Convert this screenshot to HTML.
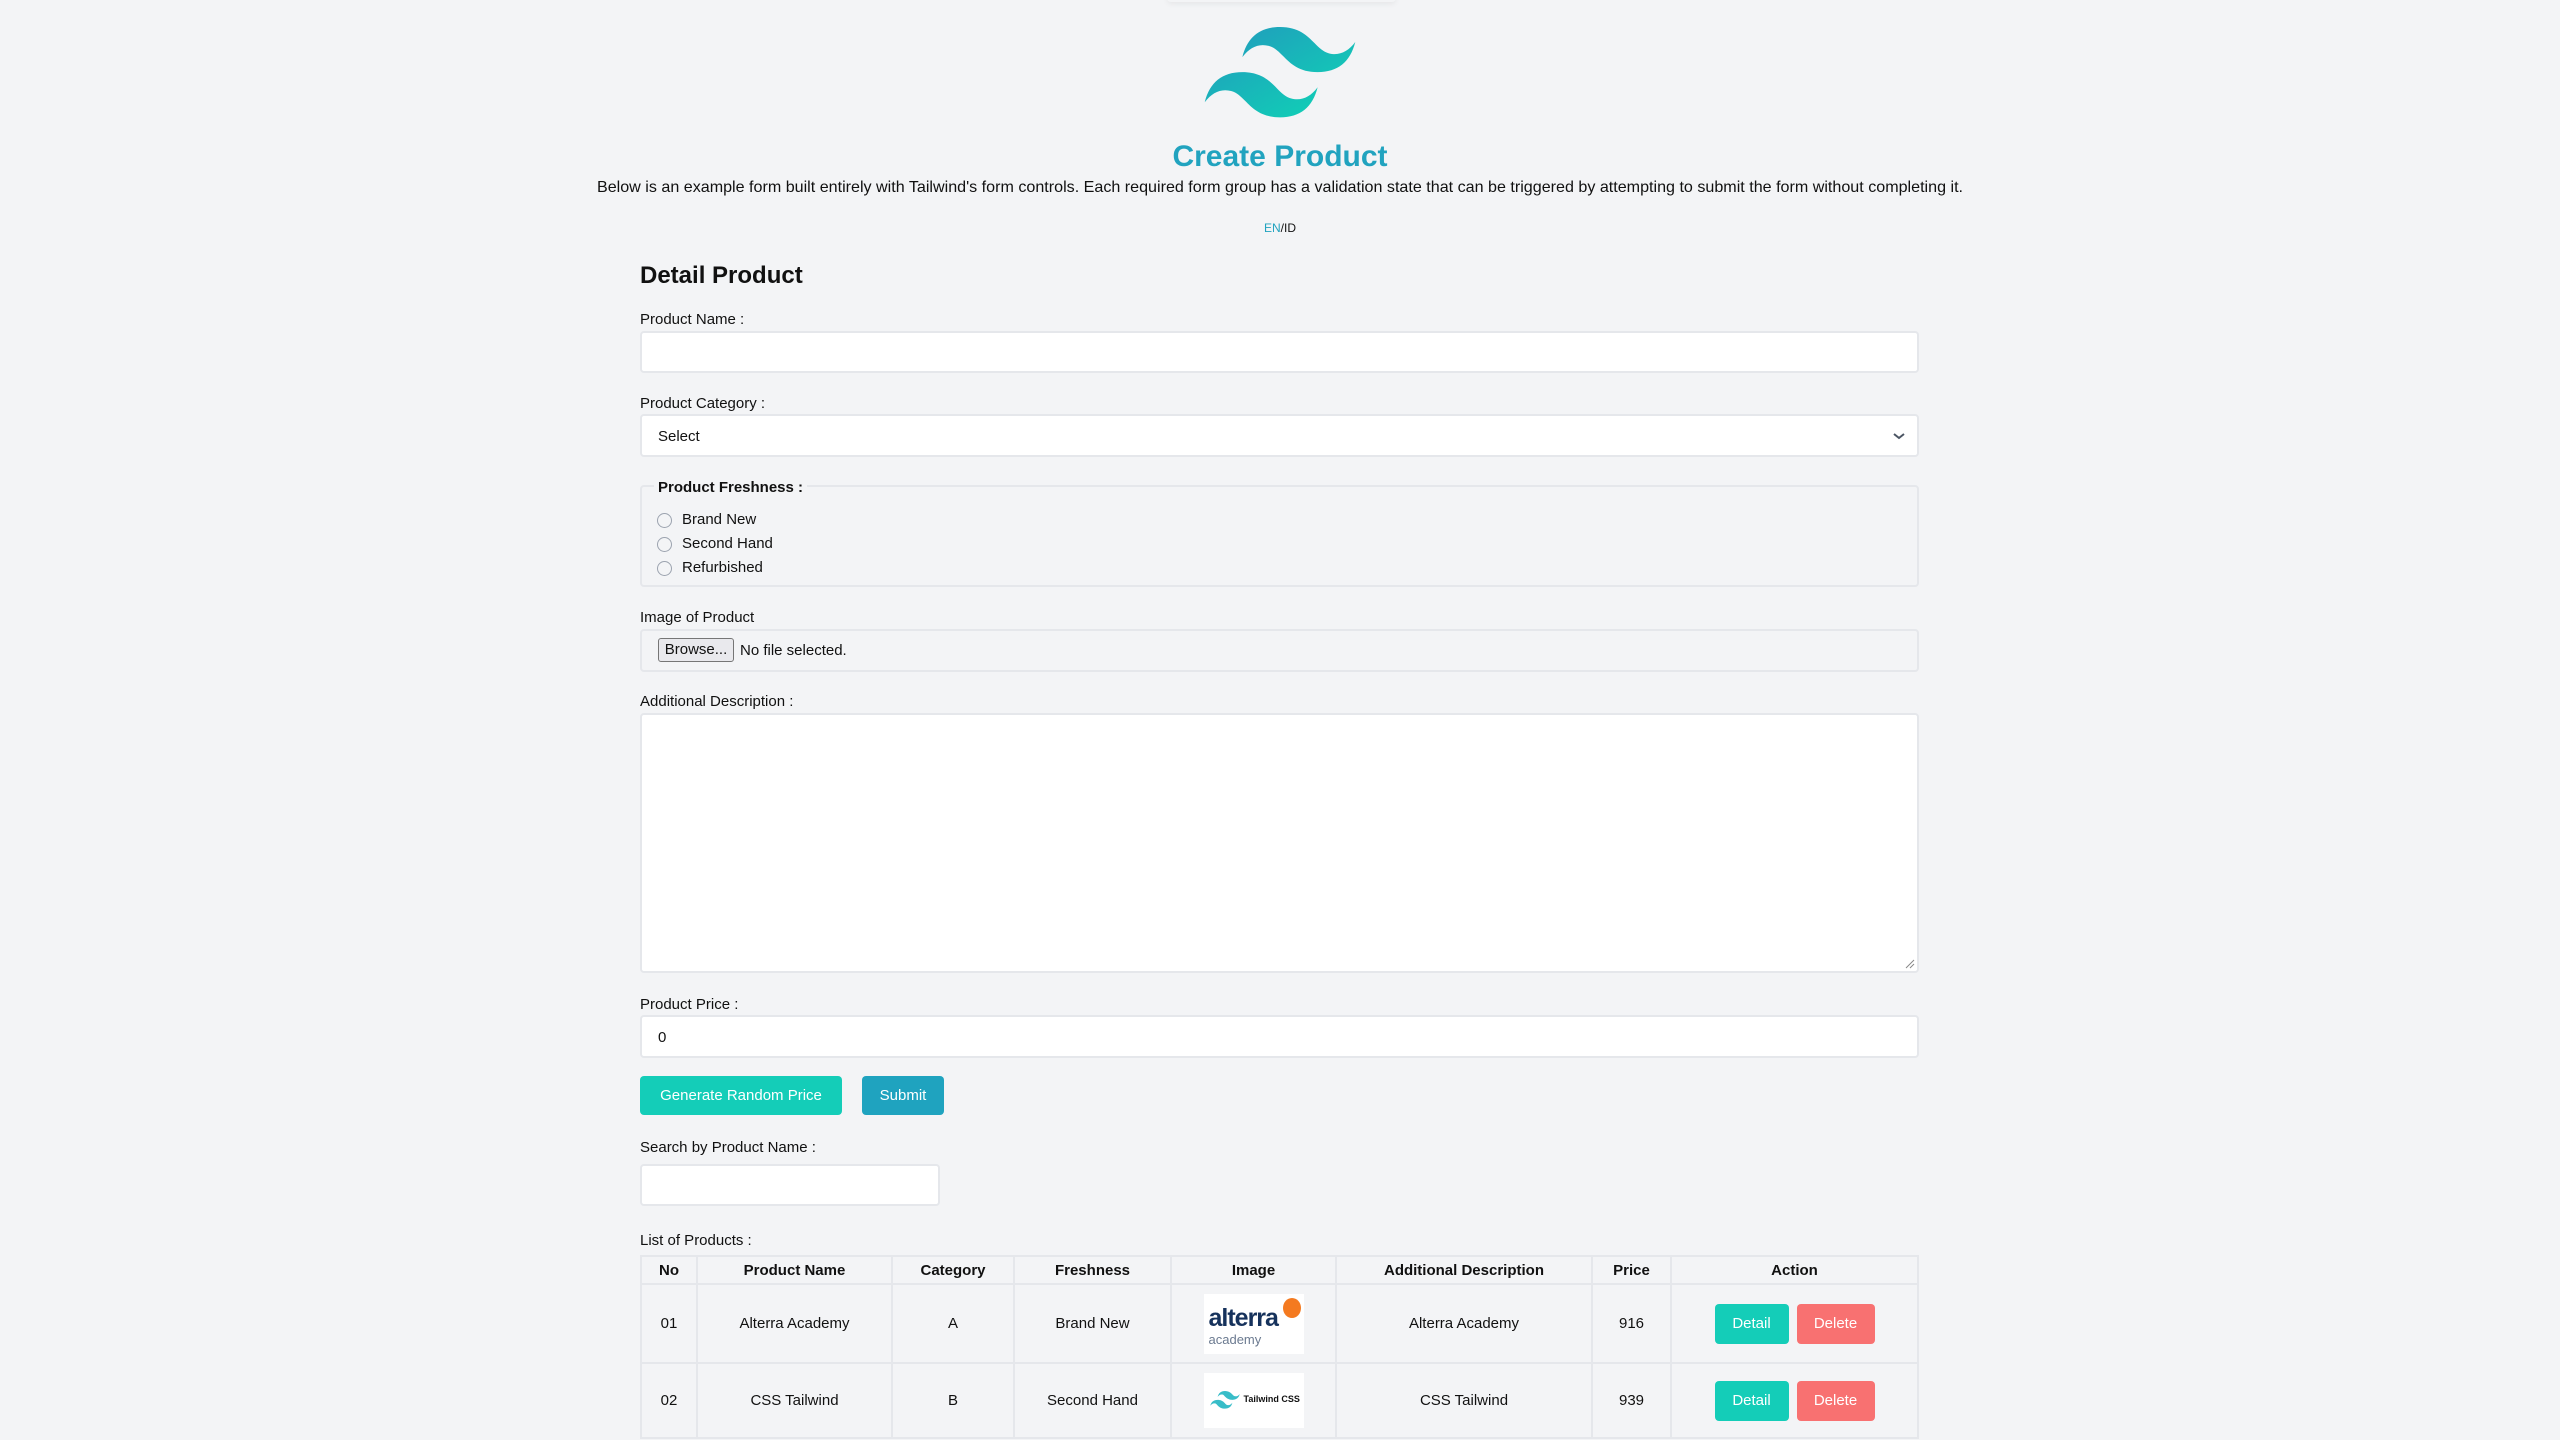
<!DOCTYPE html>
<html><head><meta charset="utf-8"><style>
*{box-sizing:border-box;margin:0;padding:0}
body{width:2560px;height:1440px;background:#f3f4f6;font-family:"Liberation Sans",sans-serif;color:#111;position:relative;overflow:hidden}
.a{position:absolute}
.lbl{position:absolute;left:640px;font-size:15px}
.inp{position:absolute;left:640px;width:1279px;background:#fff;border:2px solid #e5e7eb;border-radius:4px}
.btn{position:absolute;color:#fff;font-size:15px;border-radius:4px;display:flex;align-items:center;justify-content:center}
table{position:absolute;left:640px;top:1255px;width:1279px;border-collapse:collapse;font-size:15px}
td,th{border:2px solid #e5e7eb;text-align:center;vertical-align:middle}
th{height:28px;font-weight:bold}
.radio{position:absolute;left:657px;width:15px;height:15px;border:1px solid #9ca3af;border-radius:50%;background:#f3f4f6}
</style></head><body>
<div class="a" style="left:1167px;top:-6px;width:229px;height:8px;border-radius:6px;box-shadow:0 2px 6px rgba(0,0,0,.06);background:#f3f4f6"></div>
<svg class="a" style="left:1204px;top:27px" width="152" height="92" viewBox="0 0 54 33">
<defs><linearGradient id="g" x1="0" y1="0" x2="1" y2="1"><stop offset="0" stop-color="#2298bd"/><stop offset="1" stop-color="#0ed7b5"/></linearGradient></defs>
<path fill="url(#g)" d="M27 0c-7.2 0-11.7 3.6-13.5 10.8 2.7-3.6 5.850-4.950 9.450-4.050 2.054.513 3.522 2.004 5.147 3.653C30.744 13.090 33.808 16.200 40.500 16.200c7.200 0 11.700-3.600 13.500-10.800-2.700 3.600-5.850 4.950-9.450 4.050-2.054-.513-3.522-2.004-5.147-3.653C36.756 3.110 33.692 0 27 0zM13.500 16.200C6.300 16.200 1.800 19.800 0 27c2.700-3.600 5.850-4.950 9.450-4.050 2.054.514 3.522 2.004 5.147 3.653C17.244 29.290 20.308 32.400 27 32.400c7.200 0 11.700-3.600 13.500-10.800-2.700 3.600-5.850 4.950-9.450 4.050-2.054-.513-3.522-2.004-5.147-3.653C23.256 19.310 20.192 16.200 13.500 16.200z"/></svg>
<div class="a" style="left:0;width:2560px;top:140px;text-align:center;font-size:30px;font-weight:bold;color:#21a3bf">Create Product</div>
<div class="a" style="left:0;width:2560px;top:178px;text-align:center;font-size:16.1px">Below is an example form built entirely with Tailwind's form controls. Each required form group has a validation state that can be triggered by attempting to submit the form without completing it.</div>
<div class="a" style="left:0;width:2560px;top:221px;text-align:center;font-size:12px"><span style="color:#21a3bf">EN</span>/ID</div>
<div class="a" style="left:640px;top:262px;font-size:24px;font-weight:bold">Detail Product</div>
<div class="lbl" style="top:311px">Product Name :</div>
<div class="inp" style="top:331px;height:42px"></div>
<div class="lbl" style="top:395px">Product Category :</div>
<div class="inp" style="top:414px;height:43px"><span class="a" style="left:16px;top:12px;font-size:15px">Select</span>
<svg class="a" style="left:1250px;top:15px" width="14" height="10" viewBox="0 0 14 10"><path d="M2 3l5 4 5-4" fill="none" stroke="#4b5563" stroke-width="2"/></svg></div>
<div class="a" style="left:640px;top:485px;width:1279px;height:102px;border:2px solid #e5e7eb;border-radius:4px"></div>
<div class="a" style="left:654px;top:479px;padding:0 4px;background:#f3f4f6;font-size:15px;font-weight:bold">Product Freshness :</div>
<div class="radio" style="top:513px"></div><div class="a" style="left:682px;top:511px;font-size:15px">Brand New</div>
<div class="radio" style="top:537px"></div><div class="a" style="left:682px;top:535px;font-size:15px">Second Hand</div>
<div class="radio" style="top:561px"></div><div class="a" style="left:682px;top:559px;font-size:15px">Refurbished</div>
<div class="lbl" style="top:609px">Image of Product</div>
<div class="a" style="left:640px;top:629px;width:1279px;height:43px;border:2px solid #e5e7eb;border-radius:4px"></div>
<div class="a" style="left:658px;top:638px;width:76px;height:24px;border:1px solid #767676;border-radius:3px;background:#e9e9ed;font-size:15px;text-align:center;line-height:22px">Browse...</div>
<div class="a" style="left:740px;top:642px;font-size:15px">No file selected.</div>
<div class="lbl" style="top:693px">Additional Description :</div>
<div class="inp" style="top:713px;height:260px"><svg class="a" style="right:2px;bottom:2px" width="12" height="12"><path d="M11 3L3 11M11 7L7 11" stroke="#888" stroke-width="1"/></svg></div>
<div class="lbl" style="top:996px">Product Price :</div>
<div class="inp" style="top:1015px;height:43px"><span class="a" style="left:16px;top:12px;font-size:15px">0</span></div>
<div class="btn" style="left:640px;top:1076px;width:202px;height:39px;background:#14cdb8">Generate Random Price</div>
<div class="btn" style="left:862px;top:1076px;width:82px;height:39px;background:#1fa3bf">Submit</div>
<div class="lbl" style="top:1139px">Search by Product Name :</div>
<div class="inp" style="top:1164px;width:300px;height:42px"></div>
<div class="lbl" style="top:1232px">List of Products :</div>
<table>
<tr><th style="width:56px">No</th><th style="width:195px">Product Name</th><th style="width:122px">Category</th><th style="width:157px">Freshness</th><th style="width:165px">Image</th><th style="width:256px">Additional Description</th><th style="width:79px">Price</th><th>Action</th></tr>
<tr style="height:79px"><td>01</td><td>Alterra Academy</td><td>A</td><td>Brand New</td><td><div style="margin:0 auto;width:100px;height:60px;background:#fff;position:relative"><span class="a" style="left:5px;top:10px;font-size:25px;font-weight:bold;color:#16325c;letter-spacing:-1px">alterra</span><span class="a" style="left:5px;top:38px;font-size:13px;color:#6b7a90">academy</span><span class="a" style="left:79px;top:4px;width:18px;height:20px;border-radius:50%;background:#f47a20"></span></div></td><td>Alterra Academy</td><td>916</td><td><div style="display:flex;justify-content:center;gap:8px"><div class="btn" style="position:static;width:74px;height:40px;background:#14cdb8">Detail</div><div class="btn" style="position:static;width:78px;height:40px;background:#f87171">Delete</div></div></td></tr>
<tr style="height:75px"><td>02</td><td>CSS Tailwind</td><td>B</td><td>Second Hand</td><td><div style="margin:0 auto;width:100px;height:55px;background:#fff;position:relative"><svg class="a" style="left:6px;top:18px" width="30" height="18" viewBox="0 0 54 33"><path fill="#38bdc8" d="M27 0c-7.2 0-11.7 3.6-13.5 10.8 2.7-3.6 5.85-4.95 9.45-4.05C26 7.5 29 16.2 40.5 16.2c7.2 0 11.7-3.6 13.5-10.8-2.7 3.6-5.85 4.95-9.45 4.05C41 8.7 38 0 27 0zM13.5 16.2C6.3 16.2 1.8 19.8 0 27c2.7-3.6 5.85-4.95 9.45-4.05C13 24 15 32.4 27 32.4c7.2 0 11.7-3.6 13.5-10.8-2.7 3.6-5.85 4.95-9.45 4.05C27 24.7 25 16.2 13.5 16.2z"/></svg><span class="a" style="left:40px;top:21px;font-size:9px;font-weight:bold">Tailwind CSS</span></div></td><td>CSS Tailwind</td><td>939</td><td><div style="display:flex;justify-content:center;gap:8px"><div class="btn" style="position:static;width:74px;height:40px;background:#14cdb8">Detail</div><div class="btn" style="position:static;width:78px;height:40px;background:#f87171">Delete</div></div></td></tr>
</table>
</body></html>
